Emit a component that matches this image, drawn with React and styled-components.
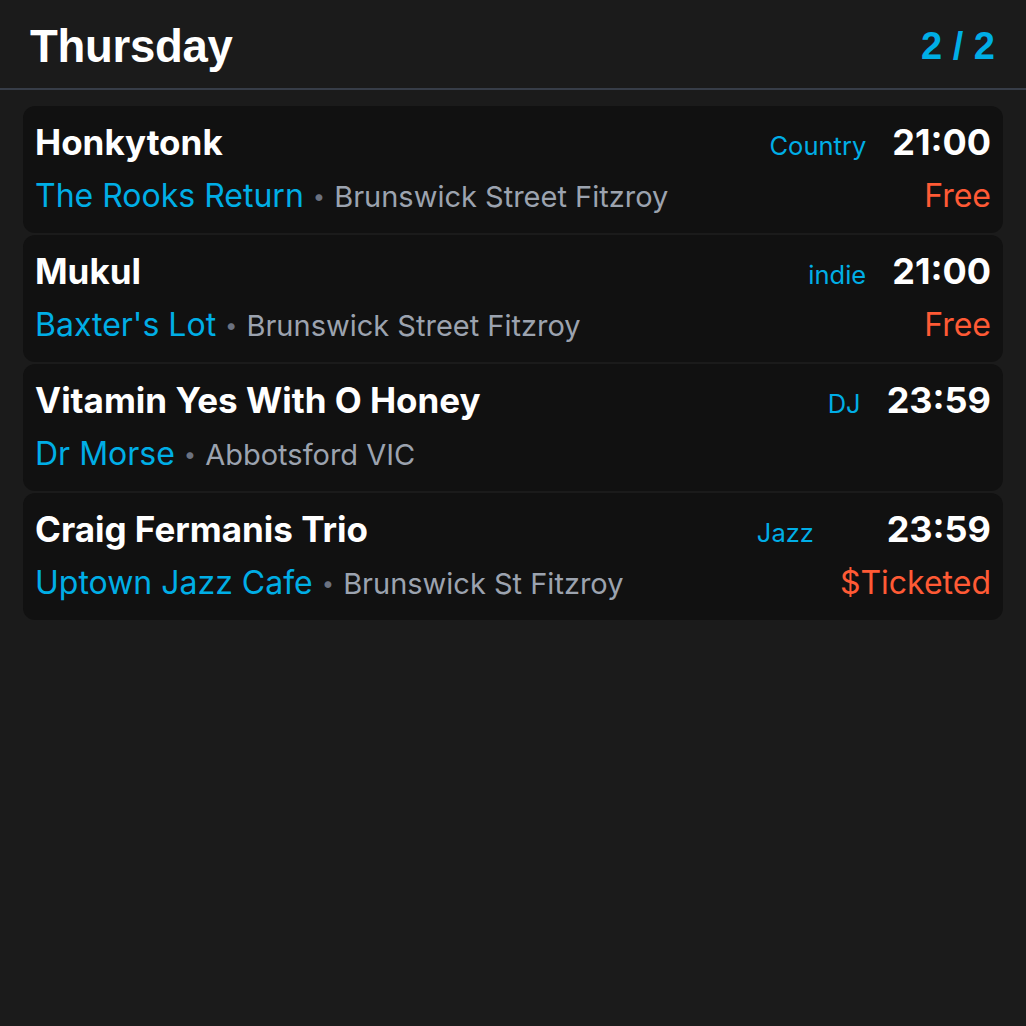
import React from "react";
import styled, { createGlobalStyle } from "styled-components";

const Global = createGlobalStyle`
  html, body { margin: 0; padding: 0; background: #1b1b1b; }
  body { font-family: Inter, "Noto Sans", sans-serif; color: #fff; }
`;

const Page = styled.div`
  min-height: 1026px;
  background: #1b1b1b;
`;

const Header = styled.header`
  box-sizing: border-box;
  height: 90px;
  display: flex;
  align-items: center;
  justify-content: space-between;
  padding: 5px 31px 0 30px;
  border-bottom: 2px solid #373d48;
`;

const Day = styled.h1`
  margin: 0;
  font-family: "Liberation Sans", Arial, sans-serif;
  font-weight: 700;
  font-size: 45.5px;
  letter-spacing: -0.3px;
  color: #fff;
`;

const Count = styled.div`
  font-family: "Liberation Sans", Arial, sans-serif;
  font-weight: 700;
  font-size: 38px;
  color: #00aee6;
`;

const List = styled.div`
  display: flex;
  flex-direction: column;
  gap: 2px;
  padding: 16px 23px;
`;

const Card = styled.div`
  background: #111111;
  border-radius: 12px;
  padding: 17px 12px 15px 12px;
  display: grid;
  grid-template-columns: 1fr auto auto;
  column-gap: 26px;
  row-gap: 12px;
  align-items: baseline;
`;

const Title = styled.div`
  font-size: 35px;
  font-weight: 700;
  line-height: 38px;
  color: #fff;
  white-space: nowrap;
`;

const Genre = styled.div`
  font-size: 25.5px;
  line-height: 38px;
  color: #00aee6;
  text-align: right;
`;

const Time = styled.div`
  font-size: 36px;
  font-weight: 700;
  line-height: 38px;
  color: #fff;
  text-align: right;
`;

const Sub = styled.div`
  grid-column: 1 / 3;
  font-size: 32px;
  line-height: 38px;
  white-space: nowrap;
`;

const Venue = styled.span`
  color: #00aee6;
`;

const Dot = styled.span`
  color: #6b7280;
  font-size: 22px;
  margin: 0 9px;
  position: relative;
  top: -3px;
`;

const Place = styled.span`
  color: #9ca3af;
  font-size: 29px;
`;

const Price = styled.div`
  grid-column: 3;
  font-size: 32px;
  line-height: 38px;
  color: #ff5a35;
  text-align: right;
`;

const events = [
  { title: "Honkytonk", genre: "Country", time: "21:00", venue: "The Rooks Return", place: "Brunswick Street Fitzroy", price: "Free" },
  { title: "Mukul", genre: "indie", time: "21:00", venue: "Baxter's Lot", place: "Brunswick Street Fitzroy", price: "Free" },
  { title: "Vitamin Yes With O Honey", genre: "DJ", time: "23:59", venue: "Dr Morse", place: "Abbotsford VIC", price: "" },
  { title: "Craig Fermanis Trio", genre: "Jazz", time: "23:59", venue: "Uptown Jazz Cafe", place: "Brunswick St Fitzroy", price: "$Ticketed" },
];

export default function App() {
  return (
    <Page>
      <Global />
      <Header>
        <Day>Thursday</Day>
        <Count>2 / 2</Count>
      </Header>
      <List>
        {events.map((e) => (
          <Card key={e.title}>
            <Title>{e.title}</Title>
            <Genre>{e.genre}</Genre>
            <Time>{e.time}</Time>
            <Sub>
              <Venue>{e.venue}</Venue>
              <Dot>•</Dot>
              <Place>{e.place}</Place>
            </Sub>
            <Price>{e.price || "\u00a0"}</Price>
          </Card>
        ))}
      </List>
    </Page>
  );
}
